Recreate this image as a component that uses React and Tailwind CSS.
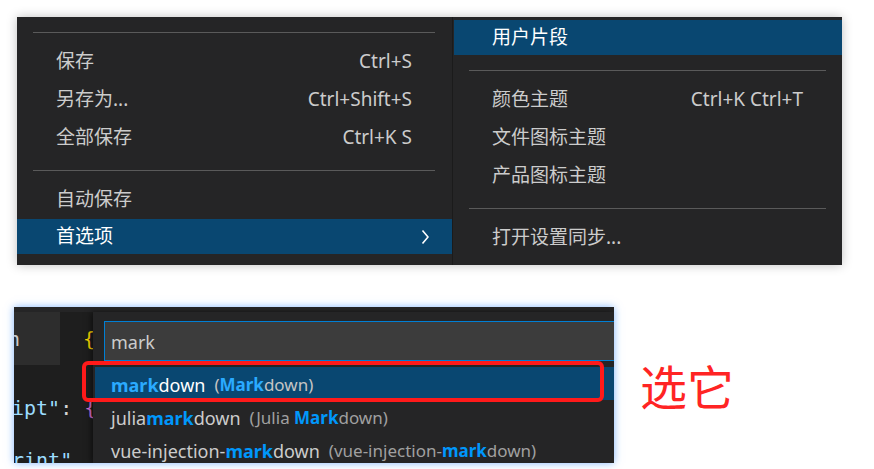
import { Fragment } from "react";

const ui = "font-['Noto_Sans','Noto_Sans_CJK_SC',sans-serif]";
const mono = "font-['DejaVu_Sans_Mono',monospace]";

const Chevron = () => (
  <svg width="8" height="16" viewBox="0 0 8 16" fill="none">
    <path d="M1.5 1.5 L7 8 L1.5 14.5" stroke="#ffffff" strokeWidth="1.6" />
  </svg>
);

const MenuRow = ({ label, keys, active, chevron, className = "" }) => (
  <div
    className={`flex items-center justify-between ${className} ${
      active ? "bg-[#094771] text-white" : "text-[#cccccc]"
    }`}
  >
    <span>{label}</span>
    {keys && <span>{keys}</span>}
    {chevron && <Chevron />}
  </div>
);

const Hl = ({ text, active }) => (
  <span className={`font-bold ${active ? "text-[#2aaaff]" : "text-[#0097fb]"}`}>
    {text}
  </span>
);

const picks = [
  { pre: "", post: "down", dPre: "(", dHl: "Mark", dPost: "down)", active: true },
  { pre: "julia", post: "down", dPre: "(Julia ", dHl: "Mark", dPost: "down)" },
  {
    pre: "vue-injection-",
    post: "down",
    dPre: "(vue-injection-",
    dHl: "mark",
    dPost: "down)",
  },
];

export default function App() {
  return (
    <div className={`w-[874px] h-[469px] bg-white overflow-hidden ${ui}`}>
      {/* Menu */}
      <div className="pt-[17px] pl-[17px]">
        <div className="flex w-[825px] h-[248px] text-[19px] shadow-[0_0_10px_rgba(0,0,0,0.25)]">
          {/* left menu */}
          <div className="w-[435px] pt-[15px] pb-[11px] bg-[#252526]">
            <div className="ml-[16px] mr-[17px] h-px bg-[#5a5a5a]" />
            <div className="mt-[9px]">
              <MenuRow label="保存" keys="Ctrl+S" className="h-[38px] pl-[39px] pr-[40px]" />
              <MenuRow label="另存为..." keys="Ctrl+Shift+S" className="h-[38px] pl-[39px] pr-[40px]" />
              <MenuRow label="全部保存" keys="Ctrl+K S" className="h-[38px] pl-[39px] pr-[40px]" />
            </div>
            <div className="mt-[14px] ml-[16px] mr-[17px] h-px bg-[#5a5a5a]" />
            <MenuRow label="自动保存" className="mt-[9px] h-[38px] pl-[39px] pr-[40px]" />
            <MenuRow label="首选项" active chevron className="mt-[1px] h-[35px] pl-[39px] pr-[23px]" />
          </div>

          {/* submenu */}
          <div className="w-[390px] pt-[3px] pb-[9px] bg-[#252526] border-l border-[#1b1b1b]">
            <MenuRow label="用户片段" active className="ml-[1px] h-[35px] pl-[38px] pr-[39px]" />
            <div className="mt-[15px] ml-[16px] mr-[16px] h-px bg-[#5a5a5a]" />
            <div className="mt-[9px]">
              <MenuRow label="颜色主题" keys="Ctrl+K Ctrl+T" className="h-[38px] pl-[39px] pr-[39px]" />
              <MenuRow label="文件图标主题" className="h-[38px] pl-[39px] pr-[39px]" />
              <MenuRow label="产品图标主题" className="h-[38px] pl-[39px] pr-[39px]" />
            </div>
            <div className="mt-[14px] ml-[16px] mr-[16px] h-px bg-[#5a5a5a]" />
            <MenuRow label="打开设置同步..." className="mt-[9px] h-[38px] pl-[39px] pr-[39px]" />
          </div>
        </div>
      </div>

      {/* Language picker */}
      <div className="flex items-start mt-[42px]">
        <div className="relative ml-[14px] w-[600px] h-[156px] overflow-hidden bg-[#1e1e1e] shadow-[0_0_8px_rgba(90,160,255,0.75)]">
          <div className="h-[5px] bg-[#252526]" />
          <div className="flex h-[53px]">
            <div className="w-[46px] bg-[#2d2d2d] flex items-center">
              <span className={`${mono} text-[20px] text-[#cccccc] -ml-[6px]`}>n</span>
            </div>
            <div className="flex items-center pl-[23px]">
              <span className={`${mono} text-[20px] text-[#ffd700]`}>{"{"}</span>
            </div>
          </div>
          <div className={`${mono} text-[20px] leading-[26px] mt-[30px] -ml-[2px] whitespace-pre`}>
            <span className="text-[#9cdcfe]">ipt"</span>
            <span className="text-[#d4d4d4]">: </span>
            <span className="text-[#da70d6]">{"{"}</span>
          </div>
          <div className={`${mono} text-[20px] leading-[26px] mt-[26px] -ml-[2px] whitespace-pre text-[#9cdcfe]`}>
            {'rint"'}
          </div>

          {/* quick pick overlay */}
          <div className="absolute left-[79px] top-[5px] right-0 bottom-0 bg-[#252526] pt-[9px] shadow-[-2px_0_6px_rgba(0,0,0,0.5)]">
            <div className="ml-[11px] h-[40px] flex items-center bg-[#3c3c3c] border border-r-0 border-[#007fd4] pl-[6px] pt-[3px] text-[18px] text-[#cccccc]">
              mark
            </div>
            <div className="mt-[6px] ml-[2px] text-[18px]">
              {picks.map((p, i) => (
                <div
                  key={i}
                  className={`h-[33px] flex items-center pl-[16px] pt-[3px] whitespace-nowrap ${
                    p.active ? "bg-[#094771] text-white" : "text-[#cccccc]"
                  }`}
                >
                  <span>
                    {p.pre}
                    <Hl text="mark" active={p.active} />
                    {p.post}
                  </span>
                  <span
                    className={`ml-[9px] text-[17px] ${
                      p.active ? "text-[#c4c4c4]" : "text-[#a0a0a0]"
                    }`}
                  >
                    {p.dPre}
                    <Hl text={p.dHl} active={p.active} />
                    {p.dPost}
                  </span>
                </div>
              ))}
            </div>
          </div>

          {/* annotation box */}
          <div className="absolute left-[68px] top-[54px] w-[522px] h-[41px] border-[4px] border-[#ff1a1a] rounded-[6px]" />
        </div>

        <div className="ml-[26px] mt-[54px] text-[47px] leading-[47px] text-[#ff2424] font-['Noto_Sans_CJK_SC',sans-serif]">
          选它
        </div>
      </div>
    </div>
  );
}
